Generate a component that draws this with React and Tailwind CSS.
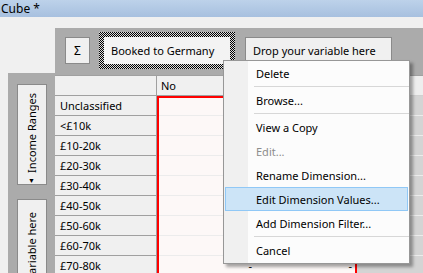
const rowLabels = ['Unclassified', '<£10k', '£10-20k', '£20-30k', '£30-40k', '£40-50k', '£50-60k', '£60-70k', '£70-80k'];

const menuItems = [
  { label: 'Delete' },
  { sep: true },
  { label: 'Browse...' },
  { sep: true },
  { label: 'View a Copy' },
  { label: 'Edit...', disabled: true },
  { label: 'Rename Dimension...' },
  { label: 'Edit Dimension Values...', active: true },
  { label: 'Add Dimension Filter...' },
  { sep: true },
  { label: 'Cancel' },
];

function ContextMenu() {
  return (
    <div className="absolute left-[223px] top-[60px] w-[187px] border border-[#979797] bg-[linear-gradient(to_right,#f0f0f0_24px,#fcfcfc_24px)] pb-[1px] shadow-[3px_3px_3px_rgba(0,0,0,0.35)]">
      {menuItems.map((item, i) =>
        item.sep ? (
          <div key={i} className="h-[3px] flex items-center pl-[30px]">
            <div className="h-px w-full bg-[#d7d7d7]"></div>
          </div>
        ) : (
          <div
            key={i}
            className={`h-[24px] flex items-center pl-[30px] mx-px border ${
              item.active ? 'bg-[#cce4f7] border-[#90c8f6]' : 'border-transparent'
            } ${item.disabled ? 'text-[#8d8d8d]' : 'text-black'}`}
          >
            {item.label}
          </div>
        )
      )}
    </div>
  );
}

export default function App() {
  return (
    <div className="relative w-[423px] h-[273px] overflow-hidden bg-[#f0f0f0] text-[11px] leading-none text-black font-['Noto_Sans',sans-serif]">
      <div className="h-[17px] bg-gradient-to-b from-[#bdd2ea] to-[#a7c0df] pl-[1px] flex items-center text-[12px]">Cube *</div>

      {/* top drop zone */}
      <div className="mt-[11px] ml-[55px] h-[47px] bg-[#ababab] flex items-start">
        <div className="mt-[9px] ml-[10px] w-[25px] h-[27px] border border-[#8a8a8a] bg-[#f0f0f0] flex items-center justify-center text-[12px]">Σ</div>
        <div className="mt-[4px] ml-[9px] w-[136px] h-[37px] p-[5px] bg-[image:repeating-conic-gradient(#000_0_25%,#dcdcdc_0_50%)] bg-[length:2px_2px]">
          <div className="h-full bg-[#f3f3f3] flex items-center pl-[7px]">Booked to Germany</div>
        </div>
        <div className="mt-[9px] ml-[10px] w-[147px] h-[27px] border border-[#8a8a8a] bg-[#f0f0f0] flex items-center pl-[7px]">Drop your variable here</div>
      </div>

      <div className="flex">
        {/* left drop zone */}
        <div className="-mt-[2px] ml-[8px] w-[47px] h-[210px] bg-[#ababab] flex flex-col items-center pt-[11px]">
          <div className="w-[30px] h-[103px] border border-[#8a8a8a] bg-[#f0f0f0] flex flex-col items-center pt-[8px]">
            <span className="[writing-mode:vertical-rl] rotate-180 whitespace-nowrap">Income Ranges</span>
            <span className="mt-[4px] text-[7px]">▼</span>
          </div>
          <div className="mt-[14px] w-[30px] h-[100px] border border-[#8a8a8a] bg-[#f0f0f0] flex flex-col items-center pt-[12px]">
            <span className="[writing-mode:vertical-rl] rotate-180 whitespace-nowrap">Drop your variable here</span>
          </div>
        </div>

        {/* table */}
        <div className="flex-1 border-t border-[#a0a0a0]">
          <div className="flex h-[20px]">
            <div className="w-[102px] border-r border-b border-[#a0a0a0] bg-[#f0f0f0]"></div>
            <div className="w-[100px] border-r border-b border-[#a0a0a0] bg-[#f0f0f0] flex items-center pl-[4px]">No</div>
            <div className="w-[100px] border-r border-b border-[#a0a0a0] bg-[#f0f0f0] flex items-center pl-[4px]">Yes</div>
            <div className="flex-1 border-b border-[#d0d0d0] bg-[#eeeeee]"></div>
          </div>
          <div className="flex">
            <div className="w-[102px] flex flex-col">
              {rowLabels.map((r) => (
                <div key={r} className="h-[20px] border-r border-b border-[#a0a0a0] bg-[#f0f0f0] flex items-center pl-[5px]">{r}</div>
              ))}
            </div>
            <div className="w-[200px] border-l-2 border-t-2 border-r-2 border-[#ff0000] bg-[#fdf8f7] flex flex-col">
              {rowLabels.map((r, i) => (
                <div key={r} className={`${i === 0 ? 'h-[18px]' : 'h-[20px]'} flex border-b border-[#ececec]`}>
                  <div className="w-1/2 flex items-center justify-end pr-[5px]">-</div>
                  <div className="w-1/2 flex items-center justify-end pr-[3px]">-</div>
                </div>
              ))}
            </div>
            <div className="flex-1 flex flex-col bg-[#d4d4d4]">
              {rowLabels.map((r) => (
                <div key={r} className="h-[20px] border-b border-[#ececec]"></div>
              ))}
            </div>
          </div>
        </div>
      </div>

      <ContextMenu />
    </div>
  );
}
